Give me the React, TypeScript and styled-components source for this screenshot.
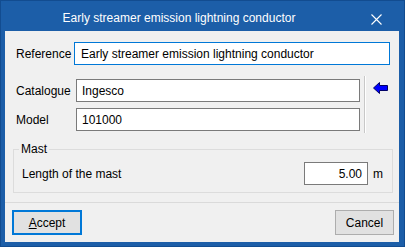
import styled, { createGlobalStyle } from "styled-components";

const GlobalStyle = createGlobalStyle`
  html, body {
    margin: 0;
    padding: 0;
    background: #ffffff;
  }
  body {
    font-family: "Liberation Sans", Arial, sans-serif;
    font-size: 12px;
  }
  * {
    box-sizing: border-box;
  }
`;

const App = () => {
  return (
    <>
      <GlobalStyle />
      <Window>
        <TitleBar>
          <Title>Early streamer emission lightning conductor</Title>
          <CloseButton>
            <svg width="11" height="11" viewBox="0 0 11 11">
              <path d="M0.5 0.5 L10.5 10.5 M10.5 0.5 L0.5 10.5" stroke="#ffffff" strokeWidth="1.1" />
            </svg>
          </CloseButton>
        </TitleBar>
        <Content>
          <ReferenceRow>
            <Label $width={58}>Reference</Label>
            <TextBox $focused>Early streamer emission lightning conductor</TextBox>
          </ReferenceRow>

          <CatalogueBlock>
            <Fields>
              <FieldRow>
                <Label $width={60}>Catalogue</Label>
                <TextBox>Ingesco</TextBox>
              </FieldRow>
              <FieldRow>
                <Label $width={60}>Model</Label>
                <TextBox>101000</TextBox>
              </FieldRow>
            </Fields>
            <VSeparator />
            <ArrowButton>
              <svg width="15" height="12" viewBox="0 0 15 12">
                <polygon
                  points="0.5,6 6.5,0.5 6.5,3.5 14.5,3.5 14.5,8.5 6.5,8.5 6.5,11.5"
                  fill="#0000ff"
                  stroke="#000066"
                  strokeWidth="1"
                />
              </svg>
            </ArrowButton>
          </CatalogueBlock>

          <Group>
            <Legend>Mast</Legend>
            <MastRow>
              <MastLabel>Length of the mast</MastLabel>
              <NumberBox>5.00</NumberBox>
              <Unit>m</Unit>
            </MastRow>
          </Group>

          <Footer>
            <DialogButton $primary $width={70}>
              <u>A</u>ccept
            </DialogButton>
            <DialogButton $width={59}>Cancel</DialogButton>
          </Footer>
        </Content>
      </Window>
    </>
  );
};

export default App;

const Window = styled.div`
  width: 405px;
  height: 247px;
  display: flex;
  flex-direction: column;
  background: #1c5ea8;
  border: 1px solid #124c90;
  padding: 0 5px 4px 4px;
`;

const TitleBar = styled.div`
  display: flex;
  align-items: center;
  height: 30px;
  flex-shrink: 0;
`;

const Title = styled.div`
  flex: 1;
  text-align: center;
  color: #ffffff;
  font-size: 12px;
  padding-top: 3px;
`;

const CloseButton = styled.div`
  width: 46px;
  height: 30px;
  display: flex;
  align-items: center;
  justify-content: center;
  padding-top: 6px;
  padding-left: 1px;
`;

const Content = styled.div`
  flex: 1;
  display: flex;
  flex-direction: column;
  background: #f0f0f0;
`;

const ReferenceRow = styled.div`
  display: flex;
  align-items: center;
  height: 23px;
  margin: 11px 9px 0 11px;
`;

const Label = styled.div<{ $width: number }>`
  width: ${({ $width }) => $width}px;
  flex-shrink: 0;
  color: #000000;
  white-space: nowrap;
`;

const TextBox = styled.div<{ $focused?: boolean }>`
  flex: 1;
  height: 23px;
  display: flex;
  align-items: center;
  padding: 0 5px;
  background: #ffffff;
  border: 1px solid ${({ $focused }) => ($focused ? "#0078d7" : "#7a7a7a")};
  color: #000000;
  white-space: nowrap;
  overflow: hidden;
  ${({ $focused }) => $focused && "padding-left: 6px;"}
`;

const CatalogueBlock = styled.div`
  display: flex;
  height: 57px;
  margin: 11px 0 0 11px;
`;

const Fields = styled.div`
  width: 344px;
  display: flex;
  flex-direction: column;
  gap: 6px;
  padding-top: 3px;
`;

const FieldRow = styled.div`
  display: flex;
  align-items: center;
  height: 23px;
`;

const VSeparator = styled.div`
  width: 1px;
  margin-left: 4px;
  background: #c8c8c8;
  border-right: 1px solid #ffffff;
  box-sizing: content-box;
`;

const ArrowButton = styled.div`
  margin-left: 7px;
  padding-top: 6px;
`;

const Group = styled.fieldset`
  margin: 8px 6px 0 8px;
  padding: 0 8px 7px 8px;
  border: 1px solid #dcdcdc;
  min-width: 0;
`;

const Legend = styled.legend`
  margin-left: -3px;
  padding: 0 2px;
  line-height: 16px;
  color: #000000;
`;

const MastRow = styled.div`
  display: flex;
  align-items: center;
  height: 23px;
  margin-top: 5px;
`;

const MastLabel = styled.div`
  flex: 1;
  color: #000000;
`;

const NumberBox = styled.div`
  width: 64px;
  height: 23px;
  display: flex;
  align-items: center;
  justify-content: flex-end;
  padding-right: 5px;
  background: #ffffff;
  border: 1px solid #7a7a7a;
  color: #000000;
`;

const Unit = styled.div`
  width: 16px;
  padding-left: 5px;
  color: #000000;
`;

const Footer = styled.div`
  margin-top: auto;
  height: 40px;
  display: flex;
  justify-content: space-between;
  align-items: flex-start;
  border-top: 1px solid #dadada;
  padding: 7px 5px 0 7px;
`;

const DialogButton = styled.div<{ $primary?: boolean; $width: number }>`
  width: ${({ $width }) => $width}px;
  height: 25px;
  display: flex;
  align-items: center;
  justify-content: center;
  background: #e1e1e1;
  border: ${({ $primary }) => ($primary ? "2px solid #0078d7" : "1px solid #adadad")};
  color: #000000;
  u {
    text-decoration: underline;
  }
`;
